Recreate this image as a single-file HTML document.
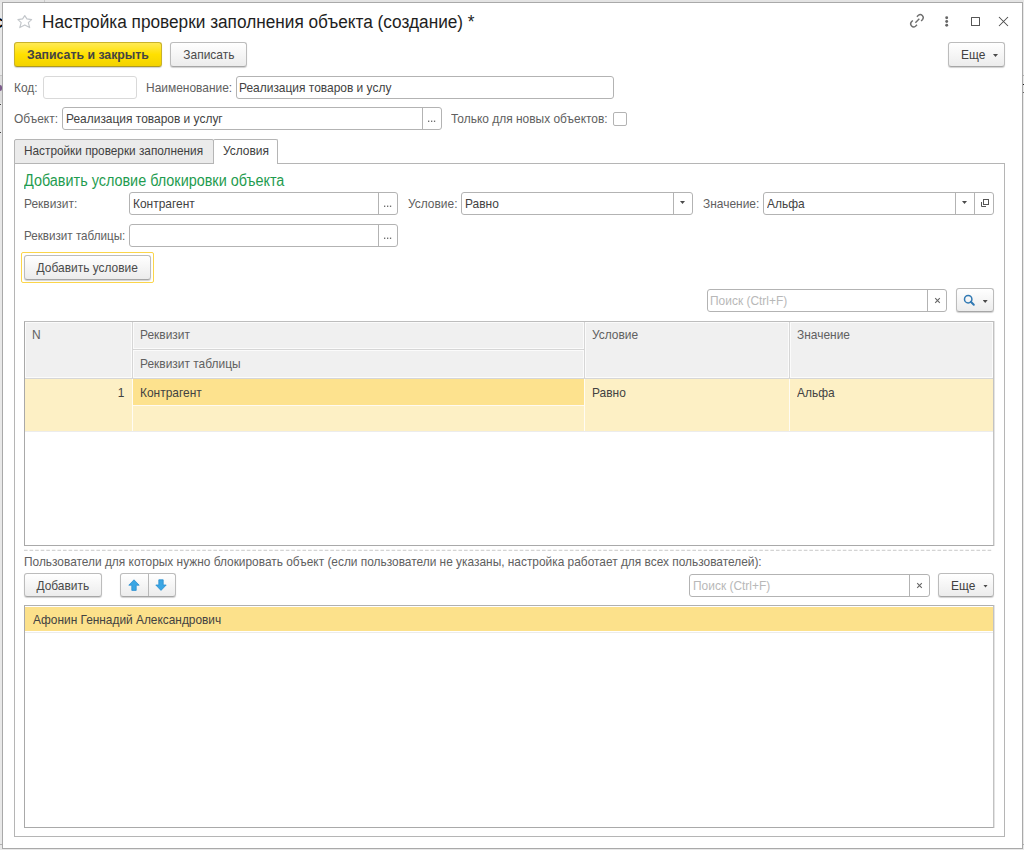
<!DOCTYPE html>
<html><head><meta charset="utf-8">
<style>
*{box-sizing:border-box;margin:0;padding:0}
html,body{width:1024px;height:850px;overflow:hidden;background:#e8e8e8}
body{position:relative;font-family:"Liberation Sans",sans-serif;font-size:13px;color:#606060}
.a{position:absolute}
.t{position:absolute;white-space:nowrap;line-height:14px;font-size:13.5px;transform:scaleX(.885);transform-origin:0 0;margin-top:.5px}
.r{transform-origin:100% 0}
#win{position:absolute;left:2px;top:2px;width:1021px;height:847px;background:#fff;border:1px solid #a9a9a9}
.btn{position:absolute;border:1px solid #bcbcbc;border-bottom-color:#a6a6a6;border-radius:3px;background:linear-gradient(#ffffff,#ececec);box-shadow:0 1px 1px rgba(0,0,0,.18);color:#4a4a4a;text-align:center;white-space:nowrap}
.bt{display:inline-block;transform:scaleX(.885);transform-origin:50% 0;font-size:13.5px}
.inp{position:absolute;border:1px solid #b3b3b3;border-radius:3px;background:#fff}
.sep{position:absolute;top:0;bottom:0;width:1px;background:#b3b3b3}
.val{color:#424242}
.hc{position:absolute;background:#f0f0f0;box-shadow:inset 0 0 0 1px #fbfbfb}
.dots{position:absolute;font-size:10px;color:#555;line-height:10px}
.tri{position:absolute;width:5px;height:3px;background:#4a4a4a;clip-path:polygon(0 0,100% 0,50% 100%)}
</style></head><body>
<!-- background fragments -->
<div class="a" style="left:0;top:0;width:1024px;height:2px;background:#e4e4e4"></div>
<div class="a" style="left:44px;top:0;width:1px;height:2px;background:#c8c8c8"></div>
<div class="a" style="left:0;top:844px;width:2px;height:1px;background:#b0b0b0"></div>
<div class="a" style="left:-7px;top:15px;font-size:14px;line-height:16px;color:#000;font-weight:bold">C</div>

<div class="a" style="left:0;top:75px;width:2px;height:1px;background:#c4c4c4"></div>
<div class="a" style="left:0;top:76px;width:2px;height:27px;background:#dcdcdc"></div>
<div class="a" style="left:0;top:85px;width:1.5px;height:6px;background:#7a5a8a;border-radius:0 3px 3px 0"></div>
<div class="a" style="left:0;top:104px;width:1px;height:1px;background:#444"></div>
<div class="a" style="left:0;top:132px;width:1px;height:1px;background:#444"></div>
<div class="a" style="left:1023px;top:75px;width:1px;height:1px;background:#b0b0b0"></div>
<div class="a" style="left:1023px;top:84px;width:1px;height:1px;background:#222"></div>
<div class="a" style="left:1023px;top:92px;width:1px;height:1px;background:#666"></div>
<div class="a" style="left:1023px;top:844px;width:1px;height:1px;background:#b0b0b0"></div>
<div id="win"></div>

<!-- header -->
<svg class="a" style="left:14px;top:11px" width="22" height="22" viewBox="0 0 22 22"><path d="M10.75 4.6 L12.9 7.9 L17.6 8.6 L14.3 11.7 L15.7 16.6 L10.75 13.9 L5.8 16.6 L7.2 11.7 L3.9 8.6 L8.6 7.9 Z" fill="none" stroke="#c3c7cb" stroke-width="1.15" stroke-linejoin="round"/></svg>
<div class="a" style="left:42px;top:11.6px;font-size:18px;line-height:20px;color:#1e1e1e;white-space:nowrap;transform:scaleX(.957);transform-origin:0 0">Настройка проверки заполнения объекта (создание) *</div>

<svg class="a" style="left:906px;top:10px" width="22" height="22" viewBox="0 0 22 22"><g fill="none" stroke="#6e6e6e" stroke-width="1.4" stroke-linecap="butt"><path d="M10.9 6.8 L12.4 5.3 A3 3 0 0 1 16.6 9.5 L15.1 11"/><path d="M11 14.7 L9.5 16.2 A3 3 0 0 1 5.3 12 L6.8 10.5"/><path d="M9.4 12.7 L13.3 8.8"/></g></svg>
<svg class="a" style="left:940px;top:12px" width="14" height="18" viewBox="0 0 14 18"><g fill="#666"><circle cx="6.7" cy="5.8" r="1.45"/><circle cx="6.7" cy="9.55" r="1.45"/><circle cx="6.7" cy="13.3" r="1.45"/></g></svg>
<div class="a" style="left:971px;top:17px;width:9px;height:9px;border:1.5px solid #555;border-radius:.5px"></div>
<svg class="a" style="left:998px;top:16px" width="11" height="11" viewBox="0 0 11 11"><path d="M1 1 L10 10 M10 1 L1 10" stroke="#4a4a4a" stroke-width="1.05"/></svg>

<!-- command bar -->
<div class="btn" style="left:14px;top:42px;width:148px;height:25px;background:linear-gradient(#ffea55,#ffe000 50%,#f3d300);border-color:#c9b22a;border-bottom-color:#ad9a22;color:#444;font-weight:bold;font-size:12.3px;line-height:25px">Записать и закрыть</div>
<div class="btn" style="left:170px;top:42px;width:77px;height:25px;line-height:24px"><span class="bt">Записать</span></div>
<div class="btn" style="left:948px;top:42px;width:57px;height:25px;line-height:24px;text-align:left"><span class="t" style="left:12px;top:4px;line-height:14px;color:#404040">Еще</span><div class="tri" style="left:44px;top:11px"></div></div>

<!-- row 1 -->
<div class="t" style="left:14px;top:80px">Код:</div>
<div class="inp" style="left:43px;top:76px;width:94px;height:23px;border-color:#d9d9d9"></div>
<div class="t" style="left:146px;top:80px">Наименование:</div>
<div class="inp" style="left:236px;top:76px;width:378px;height:23px"><div class="t val" style="left:2px;top:3px">Реализация товаров и услу</div></div>

<!-- row 2 -->
<div class="t" style="left:14px;top:111px">Объект:</div>
<div class="inp" style="left:62px;top:107px;width:380px;height:23px"><div class="t val" style="left:3px;top:3px">Реализация товаров и услуг</div><div class="sep" style="left:359px"></div><svg class="a" style="left:364.6px;top:11.8px" width="9" height="3" viewBox="0 0 9 3"><g fill="#606060"><rect x="0" y="0.6" width="1.3" height="1.3"/><rect x="3" y="0.6" width="1.3" height="1.3"/><rect x="5.9" y="0.6" width="1.3" height="1.3"/></g></svg></div>
<div class="t" style="left:451px;top:111px">Только для новых объектов:</div>
<div class="inp" style="left:613px;top:112px;width:14px;height:14px;border-radius:2px"></div>

<!-- tabs -->
<div class="a" style="left:14px;top:163px;width:991px;height:674px;border:1px solid #b5b5b5;background:#fff"></div>
<div class="a" style="left:14px;top:139px;width:200px;height:25px;border:1px solid #b5b5b5;border-radius:2px 2px 0 0;background:#ebebeb"></div>
<div class="t" style="left:24px;top:143px;color:#404040;transform:scaleX(.874)">Настройки проверки заполнения</div>
<div class="a" style="left:213px;top:139px;width:65px;height:25px;border:1px solid #b5b5b5;border-bottom:none;border-radius:2px 2px 0 0;background:#fff"></div>
<div class="t" style="left:223px;top:143px;color:#404040">Условия</div>

<!-- conditions -->
<div class="t" style="left:24px;top:171px;font-size:16px;line-height:18px;transform:scaleX(.9);color:#1f9c50">Добавить условие блокировки объекта</div>
<div class="t" style="left:24px;top:196px">Реквизит:</div>
<div class="inp" style="left:129px;top:192px;width:269px;height:23px"><div class="t val" style="left:3px;top:3px">Контрагент</div><div class="sep" style="left:248px"></div><svg class="a" style="left:253.6px;top:11.8px" width="9" height="3" viewBox="0 0 9 3"><g fill="#606060"><rect x="0" y="0.6" width="1.3" height="1.3"/><rect x="3" y="0.6" width="1.3" height="1.3"/><rect x="5.9" y="0.6" width="1.3" height="1.3"/></g></svg></div>
<div class="t" style="left:408px;top:196px">Условие:</div>
<div class="inp" style="left:461px;top:192px;width:232px;height:23px"><div class="t val" style="left:3px;top:3px">Равно</div><div class="sep" style="left:211px"></div><div class="tri" style="left:218px;top:8px"></div></div>
<div class="t" style="left:703px;top:196px">Значение:</div>
<div class="inp" style="left:763px;top:192px;width:231px;height:23px"><div class="t val" style="left:3px;top:3px">Альфа</div><div class="sep" style="left:191px"></div><div class="tri" style="left:198px;top:8px"></div><div class="sep" style="left:210px"></div>
<svg class="a" style="left:216px;top:5px" width="10" height="10" viewBox="0 0 10 10"><rect x="3.5" y="1.5" width="5" height="5" fill="none" stroke="#555" stroke-width="1"/><path d="M1.5 4 V8.5 H6" fill="none" stroke="#555" stroke-width="1"/></svg></div>
<div class="t" style="left:24px;top:228px;transform:scaleX(.862)">Реквизит таблицы:</div>
<div class="inp" style="left:129px;top:224px;width:269px;height:23px"><div class="sep" style="left:248px"></div><svg class="a" style="left:253.6px;top:11.8px" width="9" height="3" viewBox="0 0 9 3"><g fill="#606060"><rect x="0" y="0.6" width="1.3" height="1.3"/><rect x="3" y="0.6" width="1.3" height="1.3"/><rect x="5.9" y="0.6" width="1.3" height="1.3"/></g></svg></div>

<div class="a" style="left:21px;top:252px;width:133px;height:31px;border:1px solid #fbd54a;border-radius:2px"></div>
<div class="btn" style="left:24px;top:255px;width:127px;height:25px;line-height:24px"><span class="bt">Добавить условие</span></div>

<!-- search -->
<div class="inp" style="left:707px;top:289px;width:240px;height:23px"><div class="t" style="left:2px;top:3px;color:#b8b8b8">Поиск (Ctrl+F)</div><div class="sep" style="left:219px"></div>
<svg class="a" style="left:226px;top:7px" width="7" height="7" viewBox="0 0 7 7"><path d="M1.2 1.2 L5.8 5.8 M5.8 1.2 L1.2 5.8" stroke="#666" stroke-width="1.1"/></svg></div>
<div class="btn" style="left:956px;top:288px;width:38px;height:24px;border-radius:3px">
<svg class="a" style="left:6px;top:5px" width="13" height="13" viewBox="0 0 13 13"><circle cx="5.2" cy="5.2" r="3.7" fill="none" stroke="#3179b3" stroke-width="1.5"/><path d="M7.8 7.8 L10.8 10.8" stroke="#3179b3" stroke-width="2" stroke-linecap="round"/></svg>
<div class="tri" style="left:25.7px;top:11px"></div></div>

<!-- table -->
<div class="a" style="left:24px;top:321px;width:970px;height:225px;border:1px solid #a9a9a9;border-top-color:#bdbdbd;border-right-color:#c2c2c2;box-shadow:1px 0 0 #e4e4e4;background:#fff">
  <div class="a" style="left:0;top:0;width:968px;height:57px;background:#d6d6d6"></div>
  <div class="hc" style="left:0;top:0;width:107px;height:56px"></div>
  <div class="hc" style="left:108px;top:0;width:451px;height:27px"></div>
  <div class="hc" style="left:108px;top:28px;width:451px;height:28px"></div>
  <div class="hc" style="left:560px;top:0;width:204px;height:56px"></div>
  <div class="hc" style="left:765px;top:0;width:203px;height:56px"></div>
  <div class="t" style="left:7px;top:5px">N</div>
  <div class="t" style="left:115px;top:5px">Реквизит</div>
  <div class="t" style="left:115px;top:34px">Реквизит таблицы</div>
  <div class="t" style="left:567px;top:5px">Условие</div>
  <div class="t" style="left:772px;top:5px">Значение</div>
  <div class="a" style="left:0;top:57px;width:968px;height:52px;background:#fdf0c5"></div>
  <div class="a" style="left:108px;top:57px;width:451px;height:26px;background:#fde28e"></div>
  <div class="a" style="left:108px;top:83px;width:451px;height:1px;background:#fffaf0"></div>
  <div class="a" style="left:107px;top:57px;width:1px;height:52px;background:#fffcf3"></div>
  <div class="a" style="left:559px;top:57px;width:1px;height:52px;background:#fffcf3"></div>
  <div class="a" style="left:764px;top:57px;width:1px;height:52px;background:#fffcf3"></div>
  <div class="a" style="left:0;top:109px;width:968px;height:1px;background:#ececec"></div>
  <div class="t val r" style="right:868px;top:63px">1</div>
  <div class="t val" style="left:115px;top:63px">Контрагент</div>
  <div class="t val" style="left:567px;top:63px">Равно</div>
  <div class="t val" style="left:772px;top:63px">Альфа</div>
</div>

<svg class="a" style="left:24px;top:549px" width="970" height="3" viewBox="0 0 970 3"><line x1="0" y1="1.4" x2="969" y2="1.4" stroke="#d4d4d4" stroke-width="1.2" stroke-dasharray="3.6 1.97"/></svg>
<div class="t" style="left:24px;top:554px;transform:scaleX(.881)">Пользователи для которых нужно блокировать объект (если пользователи не указаны, настройка работает для всех пользователей):</div>

<div class="btn" style="left:24px;top:573px;width:78px;height:24px;line-height:23px"><span class="bt">Добавить</span></div>
<div class="btn" style="left:120px;top:573px;width:56px;height:24px">
<div class="sep" style="left:27px;background:#b8b8b8"></div>
<svg class="a" style="left:7px;top:5px" width="12" height="13" viewBox="0 0 12 13"><path d="M6 0.8 L11.2 6.2 H8.2 V11.4 H3.8 V6.2 H0.8 Z" fill="#3aa6e4" stroke="#2c8fd0" stroke-width="0.8" stroke-linejoin="round"/></svg>
<svg class="a" style="left:34px;top:5px" width="12" height="13" viewBox="0 0 12 13"><path d="M6 11.4 L11.2 6 H8.2 V0.8 H3.8 V6 H0.8 Z" fill="#3aa6e4" stroke="#2c8fd0" stroke-width="0.8" stroke-linejoin="round"/></svg>
</div>

<div class="inp" style="left:689px;top:574px;width:241px;height:23px"><div class="t" style="left:3px;top:3px;color:#b8b8b8">Поиск (Ctrl+F)</div><div class="sep" style="left:219px"></div>
<svg class="a" style="left:226px;top:7px" width="7" height="7" viewBox="0 0 7 7"><path d="M1.2 1.2 L5.8 5.8 M5.8 1.2 L1.2 5.8" stroke="#666" stroke-width="1.1"/></svg></div>
<div class="btn" style="left:938px;top:573px;width:56px;height:24px;text-align:left"><span class="t" style="left:12px;top:4px;color:#404040">Еще</span><div class="tri" style="left:44px;top:10.5px"></div></div>

<!-- list -->
<div class="a" style="left:24px;top:605px;width:970px;height:223px;border:1px solid #a9a9a9;border-top-color:#b0b0b0;border-right-color:#c2c2c2;box-shadow:1px 0 0 #e4e4e4;background:#fff">
  <div class="a" style="left:0;top:1px;width:968px;height:24px;background:#fce18b"></div>
  <div class="a" style="left:0;top:26px;width:968px;height:1px;background:#ececec"></div>
  <div class="t val" style="left:8px;top:6px;transform:scaleX(.88)">Афонин Геннадий Александрович</div>
</div>
</body></html>
